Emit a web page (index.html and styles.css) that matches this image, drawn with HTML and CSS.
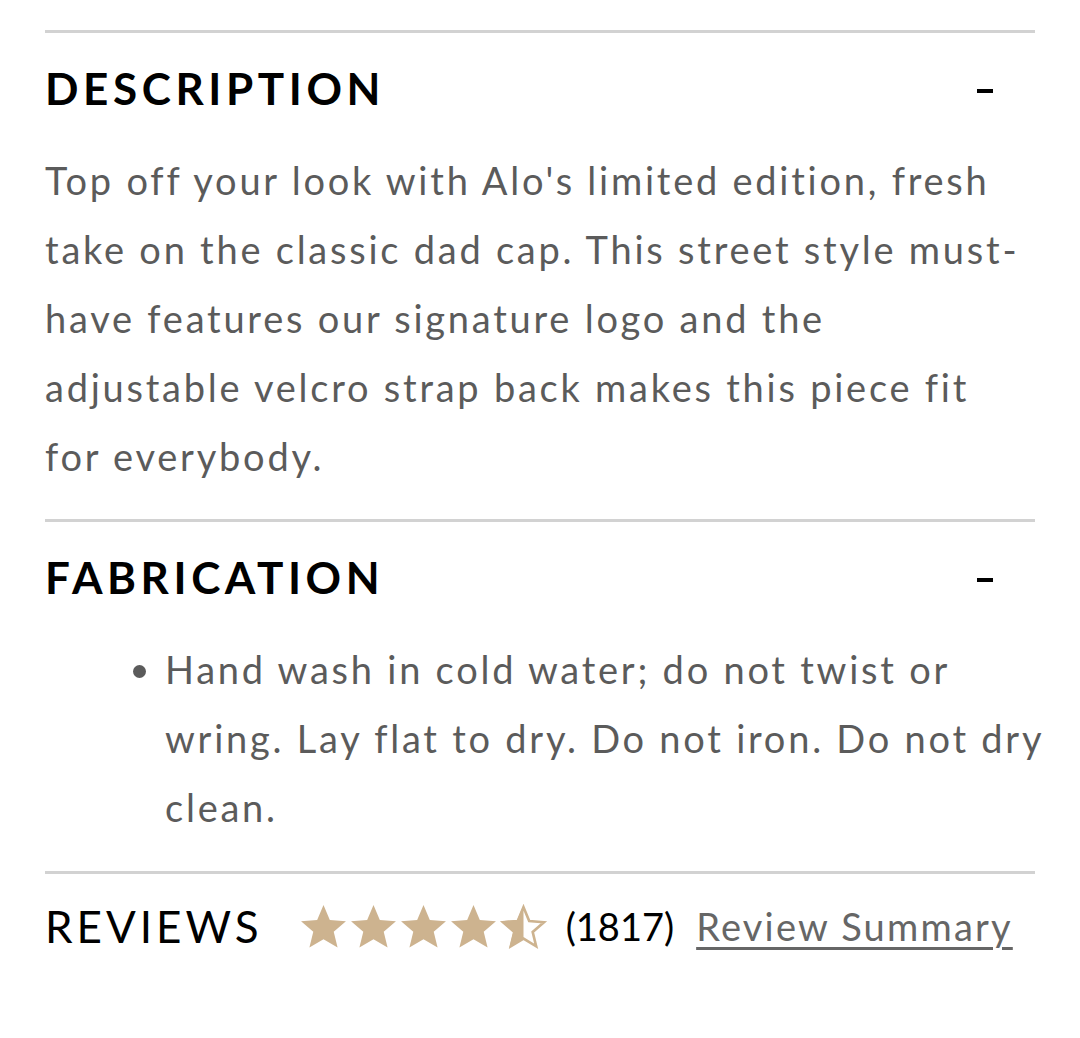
FILE: index.html
```html
<!DOCTYPE html>
<html>
<head>
<meta charset="utf-8">
<link rel="stylesheet" href="styles.css">
</head>
<body>
<div class="page">
  <section class="panel">
    <div class="panel-head">
      <h2 class="panel-title">DESCRIPTION</h2>
      <span class="toggle"></span>
    </div>
    <p class="panel-text">Top off your look with Alo's limited edition, fresh take on the classic dad cap. This street style must-have features our signature logo and the adjustable velcro strap back makes this piece fit for everybody.</p>
  </section>
  <section class="panel">
    <div class="panel-head">
      <h2 class="panel-title">FABRICATION</h2>
      <span class="toggle"></span>
    </div>
    <ul class="panel-list">
      <li>Hand wash in cold water; do not twist or wring. Lay flat to dry. Do not iron. Do not dry clean.</li>
    </ul>
  </section>
  <section class="panel reviews">
    <h2 class="reviews-title">REVIEWS</h2>
    <div class="stars">
      <svg class="star" viewBox="0 0 24 24"><path d="M12 1.5l3.1 7.3 7.9.6-6 5.2 1.9 7.7L12 18.2l-6.9 4.1 1.9-7.7-6-5.2 7.9-.6z" fill="#cdb38f"/></svg>
      <svg class="star" viewBox="0 0 24 24"><path d="M12 1.5l3.1 7.3 7.9.6-6 5.2 1.9 7.7L12 18.2l-6.9 4.1 1.9-7.7-6-5.2 7.9-.6z" fill="#cdb38f"/></svg>
      <svg class="star" viewBox="0 0 24 24"><path d="M12 1.5l3.1 7.3 7.9.6-6 5.2 1.9 7.7L12 18.2l-6.9 4.1 1.9-7.7-6-5.2 7.9-.6z" fill="#cdb38f"/></svg>
      <svg class="star" viewBox="0 0 24 24"><path d="M12 1.5l3.1 7.3 7.9.6-6 5.2 1.9 7.7L12 18.2l-6.9 4.1 1.9-7.7-6-5.2 7.9-.6z" fill="#cdb38f"/></svg>
      <svg class="star" viewBox="0 0 24 24"><path d="M12 2.6l2.8 6.7 7.2.6-5.5 4.8 1.7 7L12 17.9l-6.2 3.8 1.7-7L2 9.9l7.2-.6z" fill="none" stroke="#cdb38f" stroke-width="1.3"/><path d="M12 1.5v16.7l-6.9 4.1 1.9-7.7-6-5.2 7.9-.6z" fill="#cdb38f"/></svg>
    </div>
    <span class="count">(1817)</span>
    <a class="summary" href="#">Review Summary</a>
  </section>
</div>
</body>
</html>
```
FILE: styles.css
```css
html, body {
  margin: 0;
  padding: 0;
  background: #fff;
}
body {
  font-family: Lato, "Open Sans", sans-serif;
}
.page {
  padding: 30px 45px 0 45px;
}
.panel {
  border-top: 3px solid #d2d2d2;
}
.panel-head {
  display: flex;
  align-items: center;
  justify-content: space-between;
  height: 110px;
}
.panel-title {
  margin: 0;
  font-size: 44px;
  font-weight: 700;
  letter-spacing: 4.6px;
  color: #000;
}
.toggle {
  width: 16px;
  height: 4px;
  background: #000;
  margin-right: 42px;
  margin-top: 6px;
}
.panel-text {
  margin: 0 8px 0 0;
  padding: 3px 0 28px 0;
  font-size: 38px;
  line-height: 69px;
  letter-spacing: 2.76px;
  color: #5b5b5b;
}
.panel-list {
  margin: 0 -14px 0 0;
  padding: 3px 0 29px 120px;
  font-size: 38px;
  line-height: 69px;
  letter-spacing: 2.76px;
  color: #5b5b5b;
}
.reviews {
  display: flex;
  align-items: center;
  height: 104px;
}
.reviews-title {
  margin: 0;
  font-size: 44px;
  font-weight: 400;
  letter-spacing: 4px;
  color: #000;
}
.stars {
  display: flex;
  margin-left: 36px;
  gap: 1px;
}
.star {
  width: 49px;
  height: 49px;
}
.count {
  margin-left: 18px;
  font-size: 38px;
  color: #000;
}
.summary {
  margin-left: 22px;
  font-size: 38px;
  letter-spacing: 2.2px;
  color: #666;
  text-decoration: underline;
  text-decoration-thickness: 3px;
  text-underline-offset: 6px;
}
```
